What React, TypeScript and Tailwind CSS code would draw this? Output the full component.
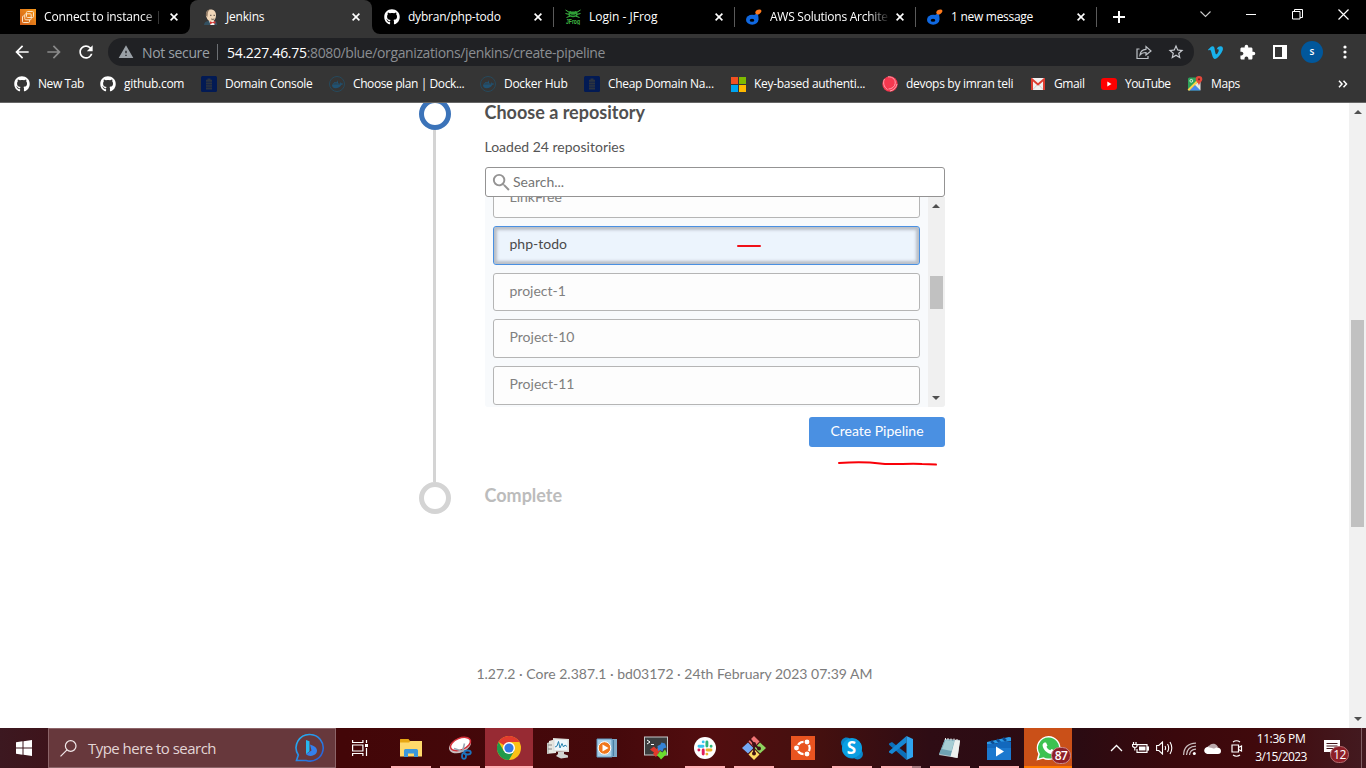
import React from "react";
import { FaGithub, FaDocker, FaVimeoV, FaSkype, FaWhatsapp } from "react-icons/fa";
import { MdExtension, MdWarning, MdSearch, MdRefresh, MdArrowBack, MdArrowForward, MdStarBorder } from "react-icons/md";

/* ---------- favicons ---------- */

const Ec2 = () => (
  <svg width="16" height="16" viewBox="0 0 16 16">
    <defs>
      <linearGradient id="ec2" x1="0" y1="1" x2="1" y2="0">
        <stop offset="0" stopColor="#d05c17" />
        <stop offset="1" stopColor="#f79a1c" />
      </linearGradient>
    </defs>
    <rect width="16" height="16" fill="url(#ec2)" />
    <g fill="none" stroke="#fbe3c4" strokeWidth="1">
      <rect x="6.500" y="2.500" width="7" height="6" rx="1" />
      <rect x="4.800" y="4.800" width="6.400" height="6" rx="1" />
      <path d="M4.800 7H3.300c-.5 0-.8.3-.8.8v5c0 .4.3.7.8.7h5.400c.5 0 .8-.3.8-.7v-2" />
    </g>
  </svg>
);

const JenkinsIcon = () => (
  <svg width="16" height="16" viewBox="0 0 16 16">
    <path d="M1 16c.2-2.500 1.500-3.500 4-4l6-.5c2 .5 3 2 3.200 4.500z" fill="#335061" />
    <path d="M6 11.500h5l.5 4.500h-4z" fill="#f5f5f5" />
    <path d="M3 5.500C3 2 5.200.4 8 .4S13 2.500 13 6c0 4-2 6.500-4.500 6.500S4 10.500 3.700 8.500C3 7.800 2.800 6.800 3 5.500z" fill="#f0d6b7" />
    <path d="M3 7C2.500 3 4 .8 7 .4 5.500 1.500 4.600 3 4.700 5.800L4.300 8z" fill="#8d7763" />
    <path d="M7 6.300h1.500M10.500 6.300H12M8.300 10c1 .5 2 .4 3 0" stroke="#4a4038" strokeWidth=".9" fill="none" />
    <path d="M7 12.200l2.500 1 2.700-1.400.3 3-2.800-.7L7 15.300z" fill="#d33833" />
  </svg>
);

const Frog = () => (
  <svg width="16" height="16" viewBox="0 0 16 16">
    <g fill="none" stroke="#40be46" strokeWidth="1">
      <path d="M.5 1l4 2.500M15.500 1l-4 2.500M.5 4.500l4 1M15.500 4.500l-4 1M1.500 8.500l3.500-1.300M14.500 8.500l-3.500-1.300" />
    </g>
    <path d="M4 2.800c.3-.8 1.500-1 2-.2h4c.5-.8 1.700-.6 2 .2l.8 2.700c-.5 1.800-2.300 2.700-4.800 2.700S3.700 7.300 3.200 5.500z" fill="#2f9e36" />
    <path d="M5 5.500c2 1 4 1 6 0" stroke="#03180a" fill="none" />
    <text x="8" y="15" fontSize="7" fontWeight="700" textAnchor="middle" textLength="14" lengthAdjust="spacingAndGlyphs" fill="#40be46" fontFamily="Liberation Sans, sans-serif">JFrog</text>
  </svg>
);

const Digi = () => (
  <svg width="16" height="16" viewBox="0 0 16 16">
    <ellipse cx="6.200" cy="10.700" rx="6.200" ry="5" fill="#1068e0" />
    <path d="M7 6.800l4.300-2.800c1.200 2.500 1.500 4.800.8 7.500z" fill="#1068e0" />
    <ellipse cx="6" cy="11.200" rx="2.300" ry="1.500" fill="#000" />
    <path d="M10.300 1.500C12 0 15 0 15.400 1.500S14 4.700 12.500 5.400c-1.500.5-3-.3-3.200-1.400-.1-1 .3-1.800 1-2.500z" fill="#ff7a1c" />
  </svg>
);

const Database = () => (
  <svg width="16" height="16" viewBox="0 0 16 16">
    <rect width="16" height="16" rx="1.500" fill="#021a54" />
    <path d="M6.500 2.500h3v1.300h1.500v9.700H5V3.800h1.500z" fill="#2d3440" />
    <path d="M5 6.200h6M5 8.700h6M5 11.200h6" stroke="#10214a" strokeWidth=".8" />
  </svg>
);

const DockerDim = () => (
  <span className="flex size-4 items-center justify-center rounded-full border border-[#26495c] text-[#215272]">
    <FaDocker size={11} />
  </span>
);

const Microsoft = () => (
  <svg width="15" height="15" viewBox="0 0 15 15">
    <path fill="#f25022" d="M0 0h7v7H0z" />
    <path fill="#7fba00" d="M8 0h7v7H8z" />
    <path fill="#00a4ef" d="M0 8h7v7H0z" />
    <path fill="#ffb900" d="M8 8h7v7H8z" />
  </svg>
);

const Ball = () => (
  <svg width="16" height="16" viewBox="0 0 16 16" className="shrink-0">
    <circle cx="8" cy="8" r="7.700" fill="#f5384f" />
    <path d="M2.500 3C.8 6 1.500 11 5.500 13.500M6 .8c5-.3 9 3.700 6.500 8.700-1 2-3.500 3.500-6 3.500M8 15c3-.5 6-3 7-7" stroke="#ffa9b5" strokeWidth=".9" fill="none" />
  </svg>
);

const Gmail = () => (
  <svg width="14" height="12" viewBox="0 0 14 12">
    <rect width="14" height="12" rx="1" fill="#f1f1f1" />
    <path d="M2 11.500l5-5.500 5 5.500" stroke="#cfcfcf" fill="none" />
    <path d="M1 12V1.300L7 6.500l6-5.200V12" stroke="#dc3d31" strokeWidth="2" fill="none" />
  </svg>
);

const YouTube = () => (
  <svg width="16" height="12" viewBox="0 0 16 12">
    <rect width="16" height="12" rx="3" fill="#f00" />
    <path d="M6.300 3.500v5l4.200-2.500z" fill="#fff" />
  </svg>
);

const Maps = () => (
  <svg width="16" height="16" viewBox="0 0 16 16">
    <path d="M2.500 1.500H13v13H2.500A1.500 1.500 0 0 1 1 13V3a1.500 1.500 0 0 1 1.500-1.500z" fill="#2fa25a" />
    <path d="M7.500 8.500l6 6H1.500z" fill="#4a86f0" />
    <path d="M13.500 5v9.500L7.500 8.500z" fill="#e6e6e6" />
    <path d="M1.300 14.200l12-12" stroke="#fdd247" strokeWidth="2" />
    <circle cx="4.300" cy="4.800" r="1.400" fill="none" stroke="#d8f1df" />
    <path d="M12 0a3.300 3.300 0 0 1 3.300 3.300c0 2.400-2.600 3-3.300 6.500-.7-3.500-3.300-4.100-3.300-6.500A3.300 3.300 0 0 1 12 0z" fill="#e3483b" />
    <circle cx="12" cy="3.300" r="1.100" fill="#7c1f1a" />
  </svg>
);

const Cross = () => (
  <svg width="8" height="8" viewBox="0 0 8 8" className="block">
    <path d="M.6.600l6.800 6.800M7.400.600L.6 7.400" stroke="#fff" strokeWidth="1.600" />
  </svg>
);

/* ---------- browser chrome ---------- */

const tabs = [
  { icon: <Ec2 />, label: "Connect to instance | E", width: "w-[182px]", track: "tracking-[-0.14px]", fade: true },
  { icon: <JenkinsIcon />, label: "Jenkins", width: "w-[182px]", track: "tracking-[-0.2px]", active: true },
  { icon: <FaGithub size={16} color="#fff" />, label: "dybran/php-todo", width: "w-[181px]", track: "tracking-[-0.22px]", line: true },
  { icon: <Frog />, label: "Login - JFrog", width: "w-[181px]", track: "tracking-[0px]", line: true },
  { icon: <Digi />, label: "AWS Solutions Archite", width: "w-[181px]", track: "tracking-[-0.25px]", fade: true, line: true },
  { icon: <Digi />, label: "1 new message", width: "w-[181px]", track: "tracking-[-0.28px]", line: true },
];

const bookmarks = [
  { icon: <FaGithub size={16} />, label: "New Tab", box: "w-[86px]", track: "tracking-[-0.42px]" },
  { icon: <FaGithub size={16} />, label: "github.com", box: "w-[101px]", track: "tracking-[-0.3px]" },
  { icon: <Database />, label: "Domain Console", box: "w-[128px]", track: "tracking-[-0.33px]" },
  { icon: <DockerDim />, label: "Choose plan | Dock...", box: "w-[151px]", track: "tracking-[-0.4px]" },
  { icon: <DockerDim />, label: "Docker Hub", box: "w-[104px]", track: "tracking-[-0.28px]" },
  { icon: <Database />, label: "Cheap Domain Na...", box: "w-[146px]", track: "tracking-[-0.3px]" },
  { icon: <Microsoft />, label: "Key-based authenti...", box: "w-[152px]", track: "tracking-[-0.3px]" },
  { icon: <Ball />, label: "devops by imran teli", box: "w-[148px]", track: "tracking-[-0.3px]" },
  { icon: <Gmail />, label: "Gmail", box: "w-[71px]", track: "tracking-[-0.4px]" },
  { icon: <YouTube />, label: "YouTube", box: "w-[86px]", track: "tracking-[-0.55px]" },
  { icon: <Maps />, label: "Maps", box: "w-[80px]", track: "tracking-[-0.4px]" },
];

function TabStrip() {
  return (
    <div className="flex h-[34px] bg-black pl-2">
      {tabs.map((t, i) => (
        <div
          key={i}
          className={`relative flex shrink-0 items-center ${t.width} ${t.active ? "rounded-t-lg bg-[#353535] pl-[13px]" : "pl-3"}`}
        >
          {t.active && (
            <>
              <svg className="absolute bottom-0 -left-2" width="8" height="8"><path d="M8 0v8H0a8 8 0 0 0 8-8z" fill="#353535" /></svg>
              <svg className="absolute -right-2 bottom-0" width="8" height="8"><path d="M0 0v8h8a8 8 0 0 1-8-8z" fill="#353535" /></svg>
            </>
          )}
          <span className="flex w-4 justify-center">{t.icon}</span>
          <span className={`w-[120px] text-[12px] whitespace-nowrap text-white ${t.track} ${t.active ? "ml-[7px]" : "ml-2"} ${t.fade ? "[mask-image:linear-gradient(to_right,#000_98px,transparent_120px)]" : ""}`}>
            {t.label}
          </span>
          <span className="ml-[6px]"><Cross /></span>
          {t.line && <span className="absolute top-[7px] -right-px h-5 w-px bg-[#5a5a5a]" />}
        </div>
      ))}
      <div className="flex flex-1 items-center pl-[17px]">
        <svg width="12" height="12" viewBox="0 0 12 12"><path d="M6 0v12M0 6h12" stroke="#fff" strokeWidth="2" /></svg>
      </div>
      <div className="flex h-[29px] w-[184px] items-center text-white">
        <div className="flex w-[46px] justify-center"><svg width="11" height="7" viewBox="0 0 11 7"><path d="M.5.500l5 5 5-5" fill="none" stroke="#ccc" strokeWidth="1.100" /></svg></div>
        <div className="flex w-[46px] justify-center"><span className="h-px w-2.5 bg-white" /></div>
        <div className="flex w-[46px] justify-center"><svg width="11" height="11" viewBox="0 0 11 11"><path d="M.5 2.500h7.500v7.500H.5zM2.500 2.500V.5H10.500v8H8" fill="none" stroke="#fff" /></svg></div>
        <div className="flex w-[46px] justify-center"><svg width="11" height="11" viewBox="0 0 11 11"><path d="M.5.500l10 10M10.500.500l-10 10" fill="none" stroke="#fff" strokeWidth="1.200" /></svg></div>
      </div>
    </div>
  );
}

function Toolbar() {
  return (
    <div className="flex h-9 items-center bg-[#353535] pl-3 text-white">
      <MdArrowBack size={20} className="shrink-0" />
      <MdArrowForward size={20} className="ml-3 shrink-0 text-[#8a8a8a]" />
      <MdRefresh size={20} className="ml-3 shrink-0" />
      <div className="ml-3 flex h-7 w-[1086px] shrink-0 items-center rounded-full bg-[#202124] pl-2.5 text-[14px] text-[#9aa0a6]">
        <MdWarning size={16} />
        <span className="ml-2 w-[68px] tracking-[-0.35px] whitespace-nowrap">Not secure</span>
        <span className="ml-[7px] h-4 w-px bg-[#6c6f73]" />
        <span className="ml-[9px] flex-1 whitespace-nowrap text-[#8b8e92]">
          <span className="tracking-[-0.28px] text-white">54.227.46.75</span>
          <span className="tracking-[-0.38px]">:8080/blue/organizations/jenkins/create-pipeline</span>
        </span>
        <svg width="16" height="16" viewBox="0 0 16 16" className="mr-[15px]" fill="none" stroke="#bdc1c6" strokeWidth="1.200">
          <path d="M3.500 5H1v9.500h11V12" />
          <path d="M4 11c.3-3.500 2.500-5.500 6-5.700V2.500L15 7l-5 4V8.500C7.500 8.500 5.500 9 4 11z" />
        </svg>
        <MdStarBorder size={18} className="mr-[9px] text-[#c8cbd0]" />
      </div>
      <FaVimeoV size={17} color="#19b1ea" className="ml-[13px] shrink-0" />
      <MdExtension size={17} className="ml-[15px] shrink-0" />
      <svg width="14" height="14" viewBox="0 0 14 14" className="ml-[17px] shrink-0"><path fillRule="evenodd" d="M0 0h14v14H0zM2 2v10h7V2z" fill="#fff" /></svg>
      <span className="ml-[14px] flex size-[22px] shrink-0 items-center justify-center rounded-full bg-[#01579b] pb-px text-[10px] font-semibold">s</span>
      <svg width="4" height="14" viewBox="0 0 4 14" className="ml-[20px] shrink-0" fill="#fff"><circle cx="2" cy="2" r="1.600" /><circle cx="2" cy="7" r="1.600" /><circle cx="2" cy="12" r="1.600" /></svg>
    </div>
  );
}

function Bookmarks() {
  return (
    <div className="flex h-[33px] items-center border-b border-[#666] bg-[#353535] pb-[4px] pl-[14px] text-[12px] text-white">
      {bookmarks.map((b) => (
        <div key={b.label} className={`flex shrink-0 items-center gap-2 ${b.box}`}>
          <span className="flex w-4 shrink-0 justify-center">{b.icon}</span>
          <span className={`whitespace-nowrap ${b.track}`}>{b.label}</span>
        </div>
      ))}
      <svg width="10" height="8" viewBox="0 0 10 8" className="ml-[71px]" fill="none" stroke="#fff" strokeWidth="1.500"><path d="M1 .8L4 4 1 7.200M5.500.8L8.500 4l-3 3.200" /></svg>
    </div>
  );
}

/* ---------- page ---------- */

const Up = () => <svg width="8" height="4" viewBox="0 0 8 4"><path d="M0 4l4-4 4 4z" fill="#505050" /></svg>;
const Down = () => <svg width="8" height="4" viewBox="0 0 8 4"><path d="M0 0l4 4 4-4z" fill="#505050" /></svg>;

function Repo({ name, size }: { name: string; size: string }) {
  return (
    <div className={`flex w-[427px] shrink-0 items-center rounded-[3px] border border-[#b5b5b5] bg-[#fdfdfd] pb-1 pl-[15.500px] text-[#808080] ${size}`}>{name}</div>
  );
}

function PipelinePage() {
  return (
    <div className="flex h-[625px] bg-white font-['Lato',sans-serif] text-[14px] text-[#555]">
      <div className="flex h-[625px] flex-1 flex-col overflow-hidden">
        <div className="flex pl-[419px]">
          <div className="-mt-[5px] flex w-8 flex-col items-start">
            <span className="size-8 shrink-0 rounded-full border-5 border-[#3b73b9]" />
            <span className="ml-[14px] h-[352px] w-[3px] bg-[#d4d4d4]" />
            <span className="size-8 shrink-0 rounded-full border-5 border-[#d4d4d4]" />
          </div>
          <div className="ml-[34px] flex w-[460px] flex-col">
            <h1 className="-ml-[0.500px] h-[34px] text-[18px] leading-[18px] font-bold text-[#505050]">Choose a repository</h1>
            <p className="-ml-[0.500px] h-[30px] leading-5">Loaded 24 repositories</p>
            <div className="flex h-[30px] items-center rounded-[3px] border border-[#949393] bg-white pl-1 text-[#757575]">
              <MdSearch size={23} color="#949393" />
              <span className="pb-0.5">Search...</span>
            </div>
            <div className="flex h-[210px] overflow-hidden rounded-b-[3px] bg-[#f8fafc]">
              <div className="-mt-[18px] flex flex-1 flex-col gap-2 pl-2">
                <Repo name="LinkFree" size="h-[39px]" />
                <div className="flex h-[39px] w-[427px] shrink-0 items-center rounded-[3px] border border-[#4a90e2] bg-[#ecf4fd] pl-[15.500px] shadow-[inset_0_0_3px_3px_#b9bfc8]">
                  <span className="w-[227.500px] pb-1 text-[#4a4a4a]">php-todo</span>
                  <svg width="24" height="4" viewBox="0 0 24 4"><path d="M1 2h22" stroke="#f01018" strokeWidth="2" strokeLinecap="round" /></svg>
                </div>
                <Repo name="project-1" size="h-[38px]" />
                <Repo name="Project-10" size="h-[39px]" />
                <Repo name="Project-11" size="h-[39px]" />
              </div>
              <div className="flex w-[17px] flex-col items-start bg-[#f0f0f0] py-[7px]">
                <span className="ml-1 flex"><Up /></span>
                <span className="mt-[68px] ml-[2px] h-[33px] w-[13px] bg-[#c1c1c1]" />
                <span className="mt-auto ml-1 flex"><Down /></span>
              </div>
            </div>
            <button className="mt-2.5 ml-auto block h-[30px] w-[136px] rounded-[3px] bg-[#4a90e2] pb-[3px] text-[14px] text-white">Create Pipeline</button>
            <svg className="mt-[13px] ml-[352px] block" width="102" height="7" viewBox="0 0 102 7">
              <path d="M2 3C15 2 32 2 43 3.500s30-.5 42 .500l14 .6" fill="none" stroke="#f90008" strokeWidth="2" strokeLinecap="round" />
            </svg>
            <h2 className="mt-[19px] -ml-[0.500px] text-[18px] leading-[18px] font-bold text-[#bcbcbc]">Complete</h2>
          </div>
        </div>
        <p className="mt-auto mb-[44px] text-center leading-5 text-[#7c7c7c]">1.27.2 · Core 2.387.1 · bd03172 · 24th February 2023 07:39 AM</p>
      </div>
      <div className="flex w-[17px] flex-col items-center bg-[#f1f1f1] py-[7px]">
        <Up />
        <span className="mt-[206px] h-[207px] w-[13px] bg-[#c1c1c1]" />
        <span className="mt-auto flex"><Down /></span>
      </div>
    </div>
  );
}

/* ---------- taskbar ---------- */

const Folder = () => (
  <svg width="22" height="20" viewBox="0 0 22 20">
    <path d="M0 1.500Q0 1 .5 1h8l1.500 2h11q1 0 1 1v14H0z" fill="#e8a713" />
    <path d="M0 4.500h9L10.500 3H22v15.500H0z" fill="#ffd96b" />
    <path d="M4 19v-6.500q0-1.500 1.500-1.500h11q1.500 0 1.500 1.500V19h-4v-3.500H8V19z" fill="#3b97dc" />
  </svg>
);
const Snip = () => (
  <svg width="24" height="24" viewBox="0 0 24 24">
    <ellipse cx="12" cy="9.500" rx="11.500" ry="7" transform="rotate(-22 12 9.500)" fill="#c9bfc0" />
    <ellipse cx="12.500" cy="8" rx="10.500" ry="5.800" transform="rotate(-22 12.500 8)" fill="#fff" stroke="#d5303a" strokeWidth="1.500" />
    <path d="M6 12.500l11 3.500M16.500 7.500l-2 8" stroke="#9aa6b3" strokeWidth="1.600" />
    <g fill="none" stroke="#1c74bd" strokeWidth="1.800"><ellipse cx="19.500" cy="16.500" rx="3.300" ry="2" /><ellipse cx="16" cy="20" rx="2" ry="2.900" /></g>
  </svg>
);
const Chrome = () => (
  <svg width="24" height="24" viewBox="0 0 24 24">
    <circle cx="12" cy="12" r="12" fill="#fbc116" />
    <path d="M12 12L1.600 6A12 12 0 0 1 22.400 6H12z" fill="#e33b2e" />
    <path d="M1.600 6A12 12 0 0 0 12 24l5.200-9H6.800z" fill="#229a4b" />
    <circle cx="12" cy="12" r="6" fill="#fff" /><circle cx="12" cy="12" r="4.600" fill="#3478e5" />
  </svg>
);
const Monitor = () => (
  <svg width="24" height="22" viewBox="0 0 24 22">
    <path d="M1 6l9-3v13l-9 1z" fill="#c4c6c1" /><path d="M3 4l7-2v14H3z" fill="#e6e6e0" />
    <path d="M2 8h4M2 12h4" stroke="#888" />
    <path d="M7 1l16 1v13l-16-.5z" fill="#dedfdb" /><path d="M8.500 2.500l13 .8v10l-13-.3z" fill="#eef6fb" />
    <path d="M9 10l2-1 1.500-4.500 1.500 6.500 2-4.500 1.500 3.500 1.500-2 2 1.500" stroke="#2683b0" fill="none" />
    <path d="M12 15h6v2l4 1.500v2l-7 1-5-2.500 2-2z" fill="#d2d4d1" />
  </svg>
);
const Media = () => (
  <svg width="21" height="20" viewBox="0 0 21 20">
    <path d="M4 1h17v18H4z" fill="#7faac8" /><path d="M1 1h15v18H1z" fill="#a9cfe8" stroke="#5f98bf" />
    <path d="M17.500 2v16" stroke="#4a7fa3" /><circle cx="8.500" cy="10" r="6.300" fill="#f0771c" stroke="#fff" strokeWidth="1" />
    <path d="M6.500 6.500v7l6-3.500z" fill="#fff" />
  </svg>
);
const Moba = () => (
  <svg width="24" height="24" viewBox="0 0 24 24">
    <rect x=".5" y="1" width="23" height="18" fill="#3b3d3e" stroke="#c6c8c9" /><path d="M3 4l3 2-3 2M7 8.500h3" stroke="#fff" fill="none" />
    <path d="M6 13.500l4-3 2.500 2.500 3-2 1 3-4.500 7-3-3 1-1.500z" fill="#e0392c" /><path d="M13.500 10l3-1.500 1-2 3.500 1 1.500 4-3 1-1 3-2.500-1.500-2 1z" fill="#3584d8" /><path d="M13 19.500l3-4.500 2.500 1.500 2.500-3 2 4-6 6-2-2.500z" fill="#6bdc2e" />
  </svg>
);
const Slack = () => (
  <svg width="22" height="22" viewBox="0 0 22 22">
    <circle cx="11" cy="11" r="11" fill="#fff" />
    <g strokeWidth="2.900" strokeLinecap="round">
      <path d="M5 9.200h4M9.200 4.900v.01" stroke="#36c5f0" />
      <path d="M12.900 5v4M17.100 9.200h.01" stroke="#2eb67d" />
      <path d="M13 13h4M12.900 17.100v.01" stroke="#ecb22e" />
      <path d="M9.200 13v4M4.900 13h.01" stroke="#e01e5a" />
    </g>
  </svg>
);
const Git = () => (
  <svg width="24" height="24" viewBox="0 0 24 24">
    <path d="M12 0l5.500 5.500L12 11 6.500 5.500z" fill="#f07575" /><path d="M6 6.500l5.500 5.500L6 17.500 0 12z" fill="#74a9f5" />
    <path d="M18 6.500l6 5.500-6 5.500-5.500-5.500z" fill="#8fd35f" /><path d="M12 13l5.500 5.500L12 24l-5.500-5.500z" fill="#ffdb62" />
    <path d="M8 3l4 5v10M12 8l5 5" stroke="#3f1016" strokeWidth="1.800" fill="none" /><circle cx="12" cy="8" r="2" fill="#3f1016" /><circle cx="17" cy="12.500" r="2" fill="#3f1016" /><circle cx="12" cy="17.500" r="2" fill="#3f1016" />
  </svg>
);
const Ubuntu = () => (
  <svg width="24" height="24" viewBox="0 0 24 24">
    <rect width="24" height="24" fill="#e95420" />
    <circle cx="12.500" cy="12" r="6.200" fill="none" stroke="#fff" strokeWidth="2.200" />
    <g fill="#fff" stroke="#e95420" strokeWidth="1.100"><circle cx="5.500" cy="12" r="3" /><circle cx="16" cy="6" r="3" /><circle cx="16" cy="18" r="3" /></g>
  </svg>
);
const Skype = () => (
  <span className="relative flex size-6 items-center justify-center">
    <FaSkype size={25} color="#0a86c9" />
    <span className="absolute inset-[2px] flex items-center justify-center rounded-full bg-[#0a9fe2] pb-px text-[17px] leading-none font-bold text-white">S</span>
  </span>
);
const Code = () => (
  <svg width="24" height="24" viewBox="0 0 24 24">
    <path d="M17.500 24v-6.500L3 6 0 7.500v1.200z" fill="#0c6fb9" />
    <path d="M17.500 0v6.500L3 18 0 16.500v-1.200z" fill="#1687d4" />
    <path d="M17.500 0L24 3v18l-6.500 3z" fill="#2fa3ee" />
  </svg>
);
const Notepad = () => (
  <svg width="23" height="22" viewBox="0 0 23 22">
    <path d="M7 2l15 1-2.500 18L1 18z" fill="#b9c4c8" /><path d="M7 2l10 1-4 16-12-2z" fill="#6fa3b4" /><path d="M7.500 3l9 1-3 10L4 12z" fill="#a6cdd4" />
    <path d="M7.500 1v2M10 1v2M13 1.500v2M16 1.500v2M19 2v2" stroke="#eee" /><path d="M17 3l5 1-2.500 17-7-1.500z" fill="#edf1ef" />
  </svg>
);
const Movies = () => (
  <svg width="24" height="23" viewBox="0 0 24 23">
    <path d="M0 5L22 0l2 .5V4L0 8z" fill="#2c9be8" /><path d="M4 4l3 3M10 2.500l3 3M16 1l3 3" stroke="#0c4b91" strokeWidth="2.500" />
    <path d="M0 7l10-.5 2-2h12V23H0z" fill="#1268bd" /><path d="M0 11h24v12H0z" fill="#1b78ce" /><path d="M9 9.500v10l8-5z" fill="#fff" />
  </svg>
);
const WhatsApp = () => (
  <span className="relative flex size-6 items-center justify-center">
    <svg width="25" height="25" viewBox="0 0 25 25" className="absolute"><path d="M12.500 0a12 12 0 1 1-5.500 22.700L.5 24.500 2.300 18A12 12 0 0 1 12.500 0z" fill="#fff" /><path d="M12.500 1.500a10.500 10.500 0 1 1-5 19.700L2.600 22.500 3.900 18A10.500 10.500 0 0 1 12.500 1.500z" fill="#3cc251" /></svg>
    <svg width="13" height="13" viewBox="0 0 13 13" className="relative"><path d="M2.500.5L4 .4l1.500 3-1 1.300c.8 1.700 2 2.800 3.800 3.600l1.300-1.300 3 1.500c.2 2-1.300 3.500-3.200 3.500C5.500 11.800 1 7.500.600 3.500.5 2.200 1.300 1 2.500.500z" fill="#fff" /></svg>
    <span className="absolute top-[11px] left-[15px] flex h-[17px] w-[20px] items-center justify-center rounded-full border border-[#c98a8d] bg-[#8e1f28] text-[12px] font-semibold tracking-[-0.5px] text-white">87</span>
  </span>
);

const apps = [
  { icon: <Folder />, open: true },
  { icon: <Snip />, open: true },
  { icon: <Chrome />, focused: true },
  { icon: <Monitor /> },
  { icon: <Media /> },
  { icon: <Moba /> },
  { icon: <Slack />, open: true },
  { icon: <Git />, open: true },
  { icon: <Ubuntu /> },
  { icon: <Skype />, open: true },
  { icon: <Code />, open: true, stacked: true },
  { icon: <Notepad />, open: true },
  { icon: <Movies />, open: true },
  { icon: <WhatsApp />, alert: true },
];

function Taskbar() {
  return (
    <div className="flex h-10 bg-[linear-gradient(90deg,#3c1820_0%,#3f1219_5%,#430608_25%,#45090b_45%,#520d0f_52%,#44100f_60%,#2e0c14_68%,#2b0b12_79%,#3a080c_86%,#40090c_92%,#431a20_100%)] text-white">
      <div className="flex w-12 items-center justify-center">
        <svg width="16" height="16" viewBox="0 0 16 16" fill="#fff"><path d="M0 2.300L6.500 1.300V7.500H0zM7.500 1.200L16 0v7.500H7.500zM0 8.500h6.500v6.200L0 13.700zM7.500 8.500H16V16l-8.500-1.200z" /></svg>
      </div>
      <div className="flex w-72 items-center border border-[#8c6468] bg-[#67383c] pl-[11px]">
        <svg width="17" height="17" viewBox="0 0 17 17" fill="none" stroke="#f1e8e9" strokeWidth="1.200"><circle cx="10.700" cy="6" r="5.300" /><path d="M7 9.800L.5 16.300" /></svg>
        <span className="ml-[11px] flex-1 text-[15px] tracking-[-0.53px] text-[#e3d5d6]">Type here to search</span>
        <svg width="30" height="30" viewBox="0 0 30 30" className="mr-[10px]">
          <defs>
            <linearGradient id="bing" x1="0" y1="0" x2="1" y2="1"><stop offset="0" stopColor="#25b8f4" /><stop offset="1" stopColor="#2857d8" /></linearGradient>
          </defs>
          <path d="M15.500 1.500a13.300 13.300 0 1 1-4.500 26H1.500L3.300 22A13.300 13.300 0 0 1 15.500 1.500z" fill="none" stroke="url(#bing)" strokeWidth="1.600" />
          <path d="M11 7l3.500 1.300v10l-3.500 3z" fill="#27b7ef" /><path d="M15 11.500q7 2 7 6 0 3-3 4.500-3 1.500-6 .5l-2-1.200 5.500-3.800z" fill="#3480ee" />
        </svg>
      </div>
      <div className="flex w-[50px] items-center pl-[16px]">
        <svg width="17" height="16" viewBox="0 0 17 16" fill="none" stroke="#fff" strokeWidth="1.200"><path d="M.6 0v2.500h10.300V0M.6 16v-2.500h10.300V16M.6 5h10.300v6H.6zM14.500 0v3M14.500 8v8" /><path d="M13 4h3v3h-3z" fill="#fff" stroke="none" /></svg>
      </div>
      {apps.map((a, i) => (
        <div key={i} className={`relative flex w-[49px] shrink-0 items-center justify-center ${a.focused ? "border-l border-transparent bg-[#972a33] bg-clip-padding" : ""} ${a.alert ? "border-l border-transparent bg-[#ca5018] bg-clip-padding" : ""}`}>
          {a.icon}
          {a.open && <span className={`absolute bottom-0 left-[5px] h-[2px] bg-[#ffb0b4] ${a.stacked ? "w-[31px]" : "w-10"}`} />}
          {a.stacked && <span className="absolute bottom-0 left-[36px] h-[2px] w-[9px] bg-[#a97b81]" />}
          {a.focused && <span className="absolute inset-x-0 bottom-0 h-[2px] bg-[#ffb0b4]" />}
          {a.alert && <span className="absolute inset-x-0 bottom-0 h-[2px] bg-[#ff7a00]" />}
        </div>
      ))}
      <div className="flex flex-1 items-center">
        <svg width="13" height="8" viewBox="0 0 13 8" className="ml-[38px]" fill="none" stroke="#fff" strokeWidth="1.300"><path d="M1 7l5.500-5.500L12 7" /></svg>
        <svg width="17" height="12" viewBox="0 0 17 12" className="ml-[9px]" fill="none" stroke="#fff" strokeWidth="1.200"><path d="M5 2.600h10v7.800H5V7" /><path d="M15.500 5h1v3h-1z" fill="#fff" /><path d="M7 4.500h6.500v4H7z" fill="#fff" stroke="none" /><path d="M1.500 0v2M4 0v2M.5 2.500h4.500v1.500q0 1.500-2 1.500T.5 4zM2.800 6v2.500" /></svg>
        <svg width="17" height="14" viewBox="0 0 17 14" className="ml-[7px]" fill="none" stroke="#fff" strokeWidth="1.100"><path d="M.6 4.500h2.200L6.500 1v12L2.800 9.500H.6zM9 5q1.200 2 0 4M11.500 3q2.400 4 0 8M14 1q3.600 6 0 12" /></svg>
        <svg width="13" height="13" viewBox="0 0 13 13" className="ml-[10px]" fill="none" stroke="#cbbfc0" strokeWidth="1.200"><path d="M.6 13Q1 1.500 13 1.200M3.500 13Q4 4.500 13 4.200M6.500 13q.5-5.500 6.500-5.800" /><circle cx="11.300" cy="11.500" r="1.500" fill="#fff" stroke="none" /></svg>
        <svg width="17" height="11" viewBox="0 0 17 11" className="ml-[8px]"><path d="M3 7a3.500 3.500 0 0 1 2.500-4.500A5 5 0 0 1 14 4l-3 3z" fill="#bbaaad" /><path d="M4 11a3.500 3.500 0 1 1 1.500-6.500c3 0 4.500 2.500 6.500 0 3-.5 5 1 5 3.500 0 2-1 3-3 3z" fill="#fff" /></svg>
        <svg width="12" height="17" viewBox="0 0 12 17" className="ml-[10px]" fill="none" stroke="#fff" strokeWidth="1.200"><path d="M2 2q3.500-2.500 7 0M2 15q3.500 2.500 7 0M1 5h6.500v7H1zM7.500 7.500L10.500 6v5l-3-1.500" /></svg>
        <div className="ml-[11px] flex w-[54px] flex-col items-center text-[12px] leading-[18px] whitespace-nowrap">
          <span className="tracking-[-0.38px]">11:36 PM</span>
          <span className="tracking-[-0.58px]">3/15/2023</span>
        </div>
        <div className="relative ml-[16px]">
          <svg width="16" height="16" viewBox="0 0 16 16" className="block"><path d="M0 0h16v12H9l-3 3v-3H0z" fill="#fff" /><path d="M2.500 3.500h11M2.500 6h11M2.500 8.500h7" stroke="#43151a" /></svg>
          <span className="absolute top-[6px] left-[6px] flex h-[17px] w-[19px] items-center justify-center rounded-full border border-[#b26d71] bg-[#8e1f28] text-[12px] tracking-[-0.5px]">12</span>
        </div>
        <span className="mr-1 ml-auto h-10 w-px bg-[#806065]" />
      </div>
    </div>
  );
}

export default function App() {
  return (
    <div className="flex h-[768px] w-[1366px] flex-col overflow-hidden bg-white font-['Open_Sans',sans-serif]">
      <TabStrip />
      <Toolbar />
      <Bookmarks />
      <PipelinePage />
      <Taskbar />
    </div>
  );
}
